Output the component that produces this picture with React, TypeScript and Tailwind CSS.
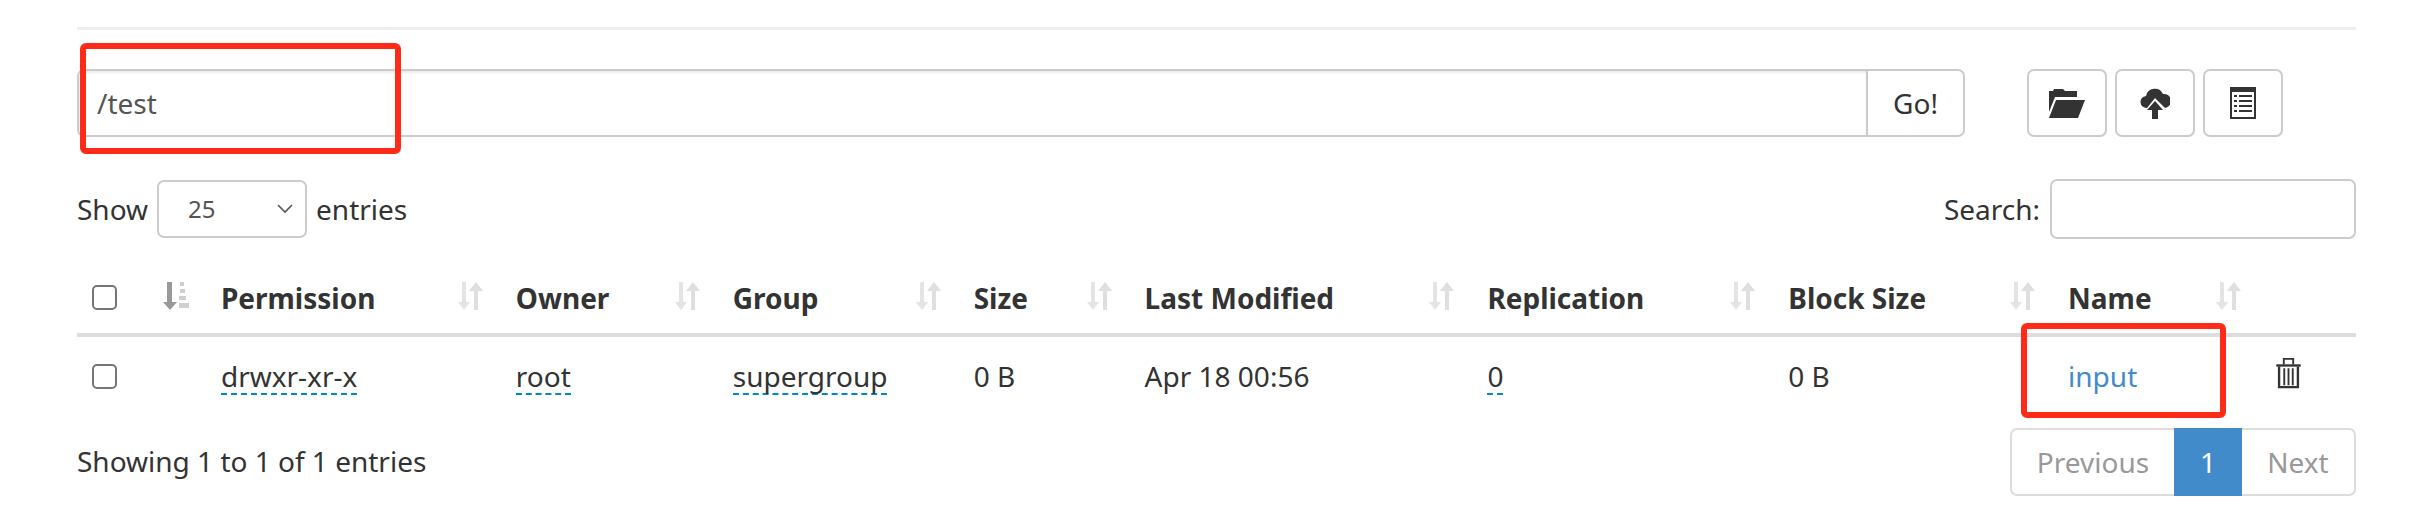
const columns = [
  { title: "Permission", width: "w-[295px]", value: "drwxr-xr-x", editable: true },
  { title: "Owner", width: "w-[217px]", value: "root", editable: true },
  { title: "Group", width: "w-[241px]", value: "supergroup", editable: true },
  { title: "Size", width: "w-[171px]", value: "0 B", editable: false },
  { title: "Last Modified", width: "w-[343px]", value: "Apr 18 00:56", editable: false },
  { title: "Replication", width: "w-[301px]", value: "0", editable: true },
  { title: "Block Size", width: "w-[280px]", value: "0 B", editable: false },
];

function SortIcon() {
  return (
    <svg viewBox="0 0 28 30" className="-mt-[4px] h-[30px] w-[28px] shrink-0" fill="#dfdfdf">
      <path d="M6 1h4v20h4l-6 8-6-8h4z" opacity="0.85" />
      <path d="M20 1l7 9h-5v19h-4V10h-5z" />
    </svg>
  );
}

function SortActiveIcon() {
  return (
    <svg viewBox="0 0 28 30" className="-mt-[4px] h-[30px] w-[28px] shrink-0">
      <path d="M6 1h5v20h5l-7 8-7-8h4z" fill="#999999" />
      <path d="M19 1h4v4h-4zM19 8h5v4h-5zM18 15h7v4h-7zM18 22h10v5H18z" fill="#cfcfcf" />
    </svg>
  );
}

function Checkbox() {
  return <span className="block h-[25px] w-[25px] rounded-[5px] border-2 border-[#767676] bg-white" />;
}

function FolderOpenIcon() {
  return (
    <svg viewBox="0 0 36 30" className="h-[30px] w-[36px]" fill="#333333">
      <path d="M0 3h4l1-2h9l2 2h12v6H6L0 24z" />
      <path d="M7 12h29l-7 18H0z" />
    </svg>
  );
}

function CloudUploadIcon() {
  return (
    <svg viewBox="0 0 30 32" className="h-[32px] w-[30px]" fill="#333333">
      <path d="M7 21a6 6 0 0 1-1-12 9 9 0 0 1 17-2 7 7 0 0 1 2 14l-10-10z" />
      <path d="M15 14l8 9h-5v9h-6v-9H7z" />
    </svg>
  );
}

function ListAltIcon() {
  return (
    <svg viewBox="0 0 26 32" className="h-[32px] w-[26px]">
      <path d="M0 0h26v32H0z" fill="#333333" />
      <path d="M2 5h22v25H2z" fill="#ffffff" />
      <path
        d="M4 8h3v2H4zM9 8h13v2H9zM4 13h3v2H4zM9 13h13v2H9zM4 18h3v2H4zM9 18h13v2H9zM4 23h3v2H4zM9 23h13v2H9z"
        fill="#333333"
      />
    </svg>
  );
}

function TrashIcon() {
  return (
    <svg viewBox="0 0 26 34" className="-mt-[6px] h-[32px] w-[25px]" fill="none" stroke="#333333" strokeWidth="2.5">
      <path d="M0 9h26" />
      <path d="M8 8V2h10v6" strokeWidth="2" />
      <path d="M3 10v22h20V10" />
      <path d="M8.5 12v18M13 12v18M17.5 12v18" strokeWidth="2" />
    </svg>
  );
}

export default function App() {
  return (
    <div
      className="relative h-[516px] w-[2410px] overflow-hidden bg-white px-[77px] pt-[27px] text-[28px] leading-[38px] text-[#333333]"
      style={{ fontFamily: '"Noto Sans", sans-serif' }}
    >
      <div className="w-[2279px]">
        <div className="h-[3px] bg-[#eeeeee]" />

        <div className="mt-[39px] flex h-[68px] items-stretch">
          <div className="flex w-[1888px] items-stretch">
            <div className="flex flex-1 items-center rounded-l-[7px] border-2 border-[#cccccc] px-[18px] text-[#555555] shadow-[inset_0_2px_2px_rgba(0,0,0,0.075)]">
              /test
            </div>
            <div className="-ml-[2px] flex w-[99px] items-center justify-center rounded-r-[7px] border-2 border-[#cccccc]">
              Go!
            </div>
          </div>
          <div className="ml-[62px] flex gap-[8px]">
            <div className="flex w-[80px] items-center justify-center rounded-[7px] border-2 border-[#cccccc]">
              <FolderOpenIcon />
            </div>
            <div className="flex w-[80px] items-center justify-center rounded-[7px] border-2 border-[#cccccc]">
              <CloudUploadIcon />
            </div>
            <div className="flex w-[80px] items-center justify-center rounded-[7px] border-2 border-[#cccccc]">
              <ListAltIcon />
            </div>
          </div>
        </div>

        <div className="mt-[42px] flex h-[60px] items-center justify-between">
          <div className="flex items-center gap-[9px]">
            <span>Show</span>
            <div className="flex h-[58px] w-[150px] items-center justify-between rounded-[7px] border-2 border-[#cccccc] pl-[29px] pr-[12px] text-[24px] text-[#555555]">
              25
              <svg viewBox="0 0 16 10" className="h-[10px] w-[16px]" fill="none" stroke="#555555" strokeWidth="1.6">
                <path d="M1 1l7 7 7-7" />
              </svg>
            </div>
            <span>entries</span>
          </div>
          <div className="flex items-center gap-[10px]">
            <span>Search:</span>
            <div className="h-[60px] w-[306px] rounded-[7px] border-2 border-[#cccccc]" />
          </div>
        </div>

        <table className="mt-[25px] table-fixed border-collapse">
          <thead>
            <tr className="h-[71px] border-b-[4px] border-[#dddddd]">
              <th className="w-[120px] p-0">
                <div className="flex items-center justify-between pb-[2px] pl-[15px] pr-[8px]">
                  <Checkbox />
                  <SortActiveIcon />
                </div>
              </th>
              {columns.map((column) => (
                <th key={column.title} className={`${column.width} p-0 text-left font-bold`}>
                  <div className="flex items-center justify-between pb-[2px] pl-[24px] pr-[8px]">
                    {column.title}
                    <SortIcon />
                  </div>
                </th>
              ))}
              <th className="w-[219px] p-0 text-left font-bold">
                <div className="flex items-center justify-between pb-[2px] pl-[24px] pr-[21px]">
                  Name
                  <SortIcon />
                </div>
              </th>
              <th className="w-[93px] p-0" />
            </tr>
          </thead>
          <tbody>
            <tr className="h-[80px]">
              <td className="p-0 pl-[15px]">
                <Checkbox />
              </td>
              {columns.map((column) => (
                <td key={column.title} className="p-0 pl-[24px]">
                  <span
                    className={
                      column.editable
                        ? "inline-block border-b-2 border-dashed border-[#0088cc] leading-[34px]"
                        : "inline-block border-b-2 border-transparent leading-[34px]"
                    }
                  >
                    {column.value}
                  </span>
                </td>
              ))}
              <td className="p-0 pl-[24px] text-[#428bca]">
                <span className="inline-block border-b-2 border-transparent leading-[34px]">input</span>
              </td>
              <td className="p-0 pl-[13px]">
                <TrashIcon />
              </td>
            </tr>
          </tbody>
        </table>

        <div className="mt-[13px] flex items-start justify-between">
          <div className="pt-[14px]">Showing 1 to 1 of 1 entries</div>
          <div className="flex h-[68px] items-stretch">
            <div className="flex w-[164px] items-center justify-center rounded-l-[7px] border-2 border-r-0 border-[#dddddd] text-[#999999]">
              Previous
            </div>
            <div className="flex w-[68px] items-center justify-center bg-[#428bca] text-white">1</div>
            <div className="flex w-[114px] items-center justify-center rounded-r-[7px] border-2 border-l-0 border-[#dddddd] text-[#999999]">
              Next
            </div>
          </div>
        </div>
      </div>

      <div className="absolute left-[80px] top-[43px] h-[111px] w-[321px] rounded-[6px] border-[6px] border-[#ff2a17]" />
      <div className="absolute left-[2021px] top-[323px] h-[95px] w-[205px] rounded-[6px] border-[6px] border-[#ff2a17]" />
    </div>
  );
}
